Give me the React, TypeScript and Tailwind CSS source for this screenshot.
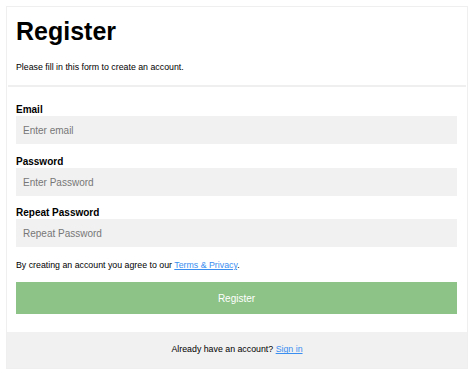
import React from "react";

export default function App() {
  return (
    <div className="w-[474px] h-[375px] bg-white pt-[6px] pl-[6px] font-['Liberation_Sans',Arial,sans-serif] text-black">
      <div className="w-[462px] border border-[#efefef]">
        <div className="pl-[9px] pr-[9px] pt-[10px]">
          <h1 className="text-[25px] leading-[28px] font-bold m-0">Register</h1>
          <p className="mt-[16px] text-[8.8px] leading-[12px]">Please fill in this form to create an account.</p>
        </div>
        <div className="mt-[12px] mx-[1px] h-[2px] bg-[#efefef]" />
        <div className="pl-[9px] pr-[10px] pt-[17px]">
          <label className="block text-[10px] leading-[12px] font-bold">Email</label>
          <input
            type="text"
            placeholder="Enter email"
            className="block w-full h-[28px] bg-[#f1f1f1] px-[7px] text-[10px] outline-none placeholder:text-[#777]"
          />
          <label className="block mt-[12px] text-[10px] leading-[12px] font-bold">Password</label>
          <input
            type="password"
            placeholder="Enter Password"
            className="block w-full h-[28px] bg-[#f1f1f1] px-[7px] text-[10px] outline-none placeholder:text-[#777]"
          />
          <label className="block mt-[11px] text-[10px] leading-[12px] font-bold">Repeat Password</label>
          <input
            type="password"
            placeholder="Repeat Password"
            className="block w-full h-[28px] bg-[#f1f1f1] px-[7px] text-[10px] outline-none placeholder:text-[#777]"
          />
          <p className="mt-[12px] text-[8.8px] leading-[12px]">
            By creating an account you agree to our{" "}
            <a href="#" className="text-[#3a8ef0] underline">Terms &amp; Privacy</a>.
          </p>
          <button className="mt-[11px] block w-full h-[32px] bg-[#8dc386] text-white text-[10px]">Register</button>
        </div>
        <div className="mt-[18px] h-[36px] bg-[#f1f1f1] flex items-center justify-center text-[8.8px]">
          <p>
            Already have an account?{" "}
            <a href="#" className="text-[#3a8ef0] underline">Sign in</a>
          </p>
        </div>
      </div>
    </div>
  );
}
